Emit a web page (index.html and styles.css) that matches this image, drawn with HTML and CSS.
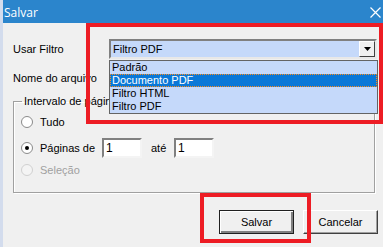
FILE: index.html
```html
<!DOCTYPE html>
<html>
<head>
<meta charset="utf-8">
<link rel="stylesheet" href="styles.css">
</head>
<body>
<div class="window">
  <div class="strip"></div>
  <div class="main">
    <div class="titlebar">
      <span class="title">Salvar</span>
      <svg class="close" width="11" height="11" viewBox="0 0 11 11"><path d="M0.5 0.5 L10.5 10.5 M10.5 0.5 L0.5 10.5" stroke="#fff" stroke-width="1.2" fill="none"/></svg>
    </div>
    <div class="content">
      <div class="row row-filter">
        <span class="label">Usar Filtro</span>
        <div class="combo">
          <div class="combo-box">
            <span class="combo-text">Filtro PDF</span>
            <span class="combo-btn"><svg width="7" height="4" viewBox="0 0 7 4"><path d="M0 0 H7 L3.5 4 Z" fill="#000"/></svg></span>
          </div>
          <ul class="dropdown">
            <li>Padrão</li>
            <li class="sel">Documento PDF</li>
            <li>Filtro HTML</li>
            <li>Filtro PDF</li>
          </ul>
        </div>
      </div>
      <div class="row row-name">
        <span class="label">Nome do arquivo</span>
      </div>
      <fieldset class="group">
        <legend>Intervalo de páginas</legend>
        <div class="opt opt-all"><span class="radio"></span><span>Tudo</span></div>
        <div class="opt opt-pages"><span class="radio checked"></span><span class="pages-label">Páginas de</span><span class="field">1</span><span class="ate">até</span><span class="field">1</span></div>
        <div class="opt opt-sel disabled"><span class="radio"></span><span>Seleção</span></div>
      </fieldset>
      <div class="buttons">
        <button class="btn default">Salvar</button>
        <button class="btn">Cancelar</button>
      </div>
    </div>
  </div>
</div>
<div class="mark mark-top"></div>
<div class="mark mark-btn"></div>
</body>
</html>
```

FILE: styles.css
```css
html, body {
  margin: 0;
  padding: 0;
}
body {
  width: 383px;
  height: 247px;
  overflow: hidden;
  background: #f0f0f0;
  font-family: "Liberation Sans", Arial, sans-serif;
  font-size: 11px;
  color: #000;
  position: relative;
}
.window {
  display: flex;
  height: 247px;
}
.strip {
  width: 3px;
  background: #d3dced;
  flex: none;
}
.main {
  flex: 1;
  display: flex;
  flex-direction: column;
}
.titlebar {
  height: 23px;
  background: #2b85cc;
  display: flex;
  align-items: center;
  justify-content: space-between;
  padding: 0 2px 0 1px;
}
.title {
  color: #fff;
  font-family: "Open Sans", "Noto Sans", sans-serif;
  font-size: 12px;
  margin-top: 2px;
}
.close {
  margin-top: 2px;
}
.content {
  padding: 16px 5px 0 10px;
  display: flex;
  flex-direction: column;
}
.row {
  display: flex;
  align-items: center;
  height: 20px;
}
.label {
  width: 96px;
  flex: none;
}
.combo {
  position: relative;
  width: 268px;
  height: 20px;
}
.combo-box {
  box-sizing: border-box;
  height: 20px;
  background: #c5d9fa;
  border: 2px solid;
  border-color: #808080 #e8e8e8 #e8e8e8 #808080;
  display: flex;
  align-items: center;
  justify-content: space-between;
  padding-left: 2px;
}
.combo-btn {
  box-sizing: border-box;
  width: 16px;
  height: 16px;
  background: #f0f0f0;
  border: 1px solid;
  border-color: #fff #404040 #404040 #fff;
  display: flex;
  align-items: center;
  justify-content: center;
}
.dropdown {
  position: absolute;
  left: 0;
  top: 21px;
  width: 269px;
  box-sizing: border-box;
  margin: 0;
  padding: 0;
  list-style: none;
  background: #c5d9fa;
  border: 1px solid #646464;
  z-index: 2;
}
.dropdown li {
  height: 13px;
  line-height: 13px;
  padding-left: 2px;
  box-sizing: border-box;
}
.dropdown li.sel {
  background: #0a78d7;
  color: #fff;
  outline: 1px dotted #ff8c1a;
  outline-offset: -1px;
}
.row-name {
  margin-top: 9px;
}
.group {
  margin: 7px 3px 0 0;
  padding: 0 0 13px 7px;
  border: 1px solid #a0a0a0;
  box-shadow: 1px 1px 0 #fff, inset 1px 1px 0 #fff;
  min-width: 0;
}
.group legend {
  padding: 0 2px;
  margin-left: 1px;
  line-height: 13px;
}
.opt {
  display: flex;
  align-items: center;
  height: 18px;
}
.opt-all {
  margin-top: 5px;
}
.opt-pages {
  height: 20px;
  margin-top: 7px;
}
.opt-sel {
  margin-top: 3px;
}
.radio {
  box-sizing: border-box;
  width: 12px;
  height: 12px;
  border-radius: 50%;
  border: 1px solid #8a8a8a;
  background: #fff;
  margin-right: 7px;
  flex: none;
  display: flex;
  align-items: center;
  justify-content: center;
}
.radio.checked::after {
  content: "";
  width: 4px;
  height: 4px;
  border-radius: 50%;
  background: #000;
}
.disabled {
  color: #a0a0a0;
}
.disabled .radio {
  border-color: #d0d0d0;
  background: #f4f4f4;
}
.pages-label {
  width: 62px;
  flex: none;
}
.field {
  box-sizing: border-box;
  width: 40px;
  height: 20px;
  background: #fff;
  border: 2px solid;
  border-color: #808080 #f4f4f4 #f4f4f4 #808080;
  padding-left: 2px;
  line-height: 16px;
  font-size: 12px;
}
.ate {
  width: 32px;
  padding-left: 9px;
  box-sizing: border-box;
}
.buttons {
  display: flex;
  justify-content: flex-end;
  gap: 9px;
  margin-top: 17px;
}
.btn {
  box-sizing: border-box;
  width: 75px;
  height: 24px;
  margin: 0;
  padding: 0;
  font-family: "Liberation Sans", Arial, sans-serif;
  font-size: 11px;
  color: #000;
  background: #f0f0f0;
  border: 1px solid;
  border-color: #fff #404040 #404040 #fff;
  box-shadow: inset -1px -1px 0 #a0a0a0;
}
.btn.default {
  border: 1px solid #202020;
  box-shadow: inset 1px 1px 0 #fff, inset -2px -2px 0 #808080;
}
.mark {
  position: absolute;
  border: 4px solid #ed1c24;
  box-sizing: border-box;
  z-index: 3;
}
.mark-top {
  left: 86px;
  top: 23px;
  width: 297px;
  height: 101px;
}
.mark-btn {
  left: 200px;
  top: 193px;
  width: 111px;
  height: 50px;
}
```
